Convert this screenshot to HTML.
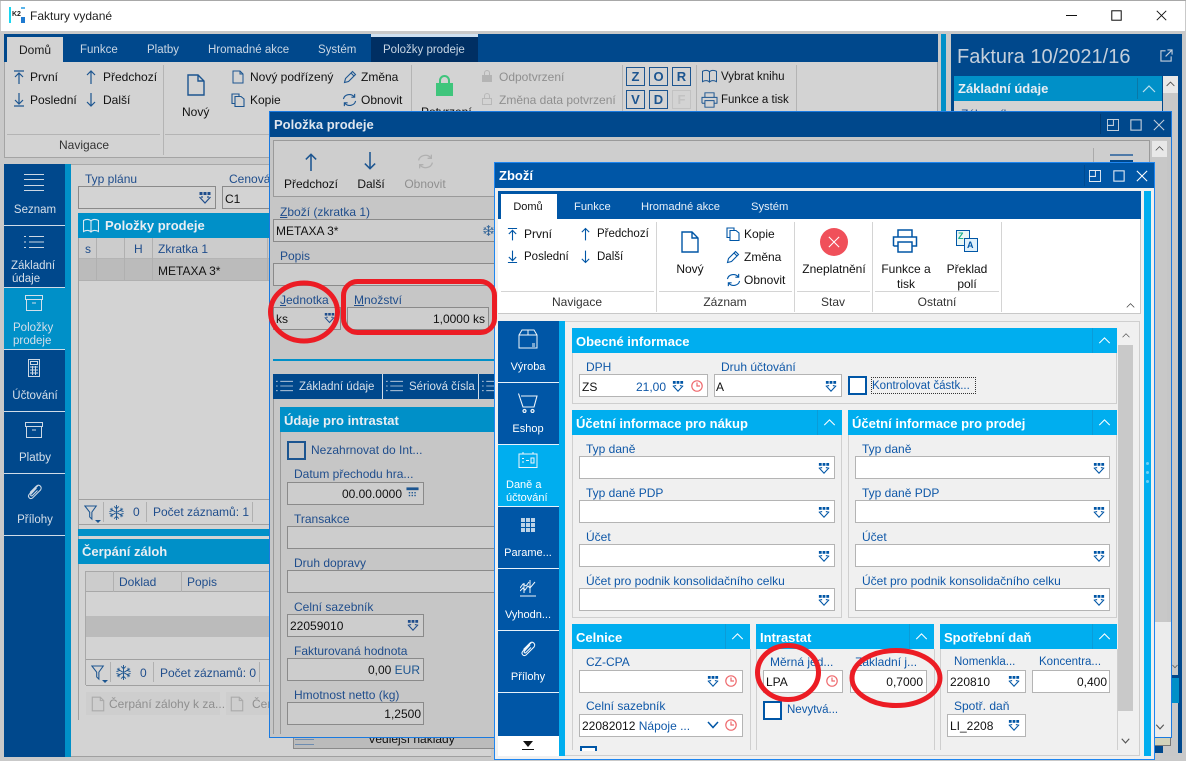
<!DOCTYPE html>
<html lang="cs"><head><meta charset="utf-8"><title>Faktury vydané</title>
<style>
html,body{margin:0;padding:0}
body{width:1186px;height:761px;position:relative;overflow:hidden;background:#c9c9c9;font-family:"Liberation Sans",sans-serif;font-size:12px;color:#111}
.b{position:absolute;box-sizing:border-box}
.t{position:absolute;white-space:nowrap;line-height:16px;font-size:12px}
.c{transform:translateX(-50%)}
.r{text-align:right}
.w{color:#fff}
.d{color:#1f4d8c}
.g{color:#8f8f8f}
.h{font-weight:bold;font-size:13px;color:#e9eef3}
.z{color:#0f58a8}
svg.i{position:absolute;overflow:visible;fill:none;stroke:currentColor;stroke-width:1.2}
.in1{position:absolute;box-sizing:border-box;border:1px solid #8a8a8a;background:#cdcdcd}
.in2{position:absolute;box-sizing:border-box;border:1px solid #b4b4b4;background:#fff}
.hd2{position:absolute;background:#00aeef;height:25px}
.hd2 span{position:absolute;left:4px;top:5px;font-weight:bold;font-size:13px;line-height:17px;color:#fff;white-space:nowrap}
.box2{position:absolute;box-sizing:border-box;border:1px solid #cfcfcf;border-top:0;background:#f0f0f0}
</style></head><body>
<svg width="0" height="0" style="position:absolute">
<defs>
<symbol id="dv" viewBox="0 0 12 14"><g fill="currentColor" stroke="none"><rect x="0.5" y="0" width="3" height="3"/><rect x="4.5" y="0" width="3" height="3"/><rect x="8.500" y="0" width="3" height="3"/></g><path d="M0.500 5L6 11L11.500 5M2 5H4M8 5H10" fill="none" stroke="currentColor" stroke-width="1.200"/></symbol>
<symbol id="clk" viewBox="0 0 12 12"><circle cx="6" cy="6" r="5.200" fill="none" stroke="#ee6a6e" stroke-width="1.200"/><path d="M6 2.500V6H9" fill="none" stroke="#ee6a6e"/></symbol>
<symbol id="first" viewBox="0 0 12 14"><path d="M1 1H11M6 14V3M2 7L6 3L10 7" fill="none" stroke="currentColor" stroke-width="1.200"/></symbol>
<symbol id="last" viewBox="0 0 12 14"><path d="M1 13H11M6 0V11M2 7L6 11L10 7" fill="none" stroke="currentColor" stroke-width="1.200"/></symbol>
<symbol id="up" viewBox="0 0 12 14"><path d="M6 14V1M2 5L6 1L10 5" fill="none" stroke="currentColor" stroke-width="1.200"/></symbol>
<symbol id="down" viewBox="0 0 12 14"><path d="M6 0V13M2 9L6 13L10 9" fill="none" stroke="currentColor" stroke-width="1.200"/></symbol>
<symbol id="doc" viewBox="0 0 18 22"><path d="M1 1H11L17 7V21H1ZM11 1V7H17" fill="none" stroke="currentColor" stroke-width="1.400"/></symbol>
<symbol id="doc2" viewBox="0 0 12 14"><path d="M1 1H8L11 4V13H1ZM8 1V4H11" fill="none" stroke="currentColor" stroke-width="1"/></symbol>
<symbol id="copy" viewBox="0 0 14 14"><path d="M4 10.500H1V1H8V3.500M4 3.500H10L13 6V13.500H4Z" fill="none" stroke="currentColor" stroke-width="1.100"/></symbol>
<symbol id="pen" viewBox="0 0 14 14"><path d="M1.500 12.500L2.500 8.500L9.500 1.500L12.500 4.500L5.500 11.500ZM8 3L11 6" fill="none" stroke="currentColor" stroke-width="1.100"/></symbol>
<symbol id="ref" viewBox="0 0 16 14"><path d="M1.500 6A6.500 6 0 0 1 13 3.500M13.500 0.500V4H10M14.500 8A6.500 6 0 0 1 3 10.500M2.500 13.500V10H6" fill="none" stroke="currentColor" stroke-width="1.200"/></symbol>
<symbol id="lst" viewBox="0 0 20 14"><path d="M5 1.500H20M5 7H20M5 12.500H20M0 1.500H2M0 7H2M0 12.500H2" fill="none" stroke="currentColor" stroke-width="1"/></symbol>
<symbol id="arch" viewBox="0 0 18 16"><path d="M0.500 0.500H17.500V4.500H0.500ZM1.500 4.500V15.500H16.500V4.500M7 8H11" fill="none" stroke="currentColor" stroke-width="1"/></symbol>
<symbol id="calc" viewBox="0 0 12 18"><path d="M0.500 0.500H11.500V17.500H0.500ZM2.500 2.500H9.500V5.500H2.500ZM2 8H10M2 11H10M2 14H10M4.500 7V16M7.500 7V16" fill="none" stroke="currentColor" stroke-width="1"/></symbol>
<symbol id="dcal" viewBox="0 0 14 14"><rect x="0.500" y="1.500" width="13" height="12" fill="none" stroke="currentColor"/><rect x="0.500" y="1.500" width="13" height="3" fill="currentColor" stroke="currentColor"/><g fill="currentColor" stroke="none"><rect x="3" y="6.500" width="1.500" height="1.500"/><rect x="6" y="6.500" width="1.500" height="1.500"/><rect x="9" y="6.500" width="1.500" height="1.500"/><rect x="3" y="9.500" width="1.500" height="1.500"/><rect x="6" y="9.500" width="1.500" height="1.500"/><rect x="9" y="9.500" width="1.500" height="1.500"/></g></symbol>
<symbol id="clip" viewBox="0 0 16 18"><path d="M11.500 2.500L3 11C0.500 13.500 3.500 17 6 15L14 7C16 4.500 13 0.500 10 3L3.500 9.500M10 5L4.500 11C3.500 12.500 5 13.500 6 12.500L11 7.500" fill="none" stroke="currentColor" stroke-width="1.100"/></symbol>
<symbol id="book" viewBox="0 0 16 16"><path d="M0.500 2.500C3 1 6.500 1 8 3C9.500 1 13 1 15.500 2.500V13.500C13 12 9.500 12 8 14C6.500 12 3 12 0.500 13.500ZM8 3V14" fill="none" stroke="currentColor" stroke-width="1.100"/></symbol>
<symbol id="prn" viewBox="0 0 26 24"><path d="M6 8V1H20V8M1.500 17V8H24.500V17H20M6 17H1.500M6 13H20V23H6Z" fill="none" stroke="currentColor" stroke-width="1.500"/></symbol>
<symbol id="flt" viewBox="0 0 16 18"><path d="M1 1H14L9 8V16L6.500 13.500V8Z" fill="none" stroke="currentColor" stroke-width="1.200"/></symbol>
<symbol id="snow" viewBox="0 0 16 16"><path d="M8 0V16M1 4L15 12M1 12L15 4M5.500 1.500L8 4L10.500 1.500M5.500 14.500L8 12L10.500 14.500M0.500 7L3.500 6L3 3M15.500 9L12.500 10L13 13M0.500 9L3.500 10L3 13M15.500 7L12.500 6L13 3" fill="none" stroke="currentColor" stroke-width="1"/></symbol>
<symbol id="box" viewBox="0 0 20 20"><path d="M1 6L4 1H16L19 6V19H1ZM1 6H19M10 1V6M14 15H17M14 17H17" fill="none" stroke="currentColor" stroke-width="1"/></symbol>
<symbol id="cart" viewBox="0 0 20 20"><path d="M0.500 0.500L5 14H16L19 3H3" fill="none" stroke="currentColor" stroke-width="1.100"/><circle cx="6.500" cy="18" r="1.500" fill="none" stroke="currentColor"/><circle cx="14.500" cy="18" r="1.500" fill="none" stroke="currentColor"/></symbol>
<symbol id="cal" viewBox="0 0 20 16"><path d="M1 2H19V15.500H1ZM5 0V2M15 0V2M4 6.500H6M4 10H6M8 8.500H11M13 6H16V11H13Z" fill="none" stroke="currentColor" stroke-width="1"/></symbol>
<symbol id="grid" viewBox="0 0 14 14"><g fill="currentColor" opacity=".85"><rect x="0" y="0" width="4" height="4"/><rect x="5" y="0" width="4" height="4"/><rect x="10" y="0" width="4" height="4"/><rect x="0" y="5" width="4" height="4"/><rect x="5" y="5" width="4" height="4"/><rect x="10" y="5" width="4" height="4"/><rect x="0" y="10" width="4" height="4"/><rect x="5" y="10" width="4" height="4"/><rect x="10" y="10" width="4" height="4"/></g></symbol>
<symbol id="chart" viewBox="0 0 16 18"><path d="M0 17H16M0 12L3 9L5 11L8 7L10 9L15 3M0 9L3 5L6 7L9 3M4 4V14M10 1V14" fill="none" stroke="currentColor" stroke-width="1"/></symbol>
<symbol id="ext" viewBox="0 0 14 14"><path d="M6 2H1V13H12V8M8 1H13V6M13 1L6 8" fill="none" stroke="currentColor" stroke-width="1.200"/></symbol>
<symbol id="rest" viewBox="0 0 14 14"><path d="M0.500 0.500H13.500V13.500H0.500ZM7.500 0.500V7.500H0.500" fill="none" stroke="currentColor" stroke-width="1.200"/></symbol>
<symbol id="maxi" viewBox="0 0 14 14"><rect x="1" y="1" width="12" height="12" fill="none" stroke="currentColor" stroke-width="1.300"/></symbol>
<symbol id="xx" viewBox="0 0 14 14"><path d="M1 1L13 13M13 1L1 13" fill="none" stroke="currentColor" stroke-width="1.200"/></symbol>
<symbol id="cu" viewBox="0 0 14 8"><path d="M1 7L7 1L13 7" fill="none" stroke="currentColor" stroke-width="1.200"/></symbol>
<symbol id="cd" viewBox="0 0 12 8"><path d="M1 1L6 6.500L11 1" fill="none" stroke="currentColor" stroke-width="1.500"/></symbol>
</defs></svg>

<!-- window chrome -->
<div class="b" style="left:0;top:0;width:1186px;height:1px;background:#a8a8a8"></div>
<div class="b" style="left:1px;top:1px;width:1184px;height:30px;background:#fff"></div>
<div class="b" style="left:9px;top:7px;width:2px;height:16px;background:#19d6f0"></div>
<div class="t" style="left:12px;top:10px;font-size:7px;line-height:10px;font-weight:bold;color:#222">K2</div>
<div class="b" style="left:21px;top:17px;width:4px;height:6px;background:#1f7ad0"></div>
<div class="b" style="left:21px;top:7px;width:4px;height:2px;background:#5ab4ea"></div>
<div class="t" style="left:30px;top:8px;color:#222">Faktury vydané</div>
<div class="b" style="left:1066px;top:15px;width:11px;height:1px;background:#111"></div>
<svg class="i" style="left:1111px;top:10px;width:11px;height:11px;color:#111"><use href="#maxi"/></svg>
<svg class="i" style="left:1156px;top:10px;width:11px;height:11px;color:#111"><use href="#xx"/></svg>

<!-- main ribbon -->
<div class="b" style="left:4px;top:34px;width:934px;height:28px;background:#00488c"></div>
<div class="b" style="left:7px;top:37px;width:56px;height:25px;background:#d3d3d3"></div>
<div class="t c" style="left:35px;top:42px;color:#1a1a1a">Domů</div>
<div class="t" style="left:80px;top:42px;font-size:11.500px;color:#c9d6e4">Funkce</div>
<div class="t" style="left:147px;top:42px;font-size:11.500px;color:#c9d6e4">Platby</div>
<div class="t" style="left:208px;top:42px;font-size:11.500px;color:#c9d6e4">Hromadné akce</div>
<div class="t" style="left:318px;top:42px;font-size:11.500px;color:#c9d6e4">Systém</div>
<div class="b" style="left:371px;top:34px;width:107px;height:28px;background:#002f63;border-top:3px solid #cfe0f0"></div>
<div class="t" style="left:383px;top:42px;font-size:11.500px;color:#c9d6e4">Položky prodeje</div>
<div class="b" style="left:4px;top:62px;width:934px;height:96px;background:#d3d3d3;border:1px solid #a4a4a4;border-top:0"></div>
<div class="b" style="left:163px;top:65px;width:1px;height:90px;background:#b4b4b4"></div>
<div class="b" style="left:411px;top:65px;width:1px;height:90px;background:#b4b4b4"></div>
<div class="b" style="left:622px;top:65px;width:1px;height:90px;background:#b4b4b4"></div>
<div class="b" style="left:696px;top:65px;width:1px;height:90px;background:#b4b4b4"></div>
<div class="b" style="left:796px;top:65px;width:1px;height:90px;background:#b4b4b4"></div>
<div class="b" style="left:7px;top:134px;width:153px;height:1px;background:#b4b4b4"></div>
<div class="b" style="left:165px;top:134px;width:244px;height:1px;background:#b4b4b4"></div>
<div class="t c d" style="left:84px;top:137px;color:#333">Navigace</div>
<svg class="i" style="left:13px;top:70px;width:12px;height:14px;color:#1c5590"><use href="#first"/></svg>
<div class="t" style="left:30px;top:69px">První</div>
<svg class="i" style="left:85px;top:70px;width:12px;height:14px;color:#1c5590"><use href="#up"/></svg>
<div class="t" style="left:103px;top:69px">Předchozí</div>
<svg class="i" style="left:13px;top:93px;width:12px;height:14px;color:#1c5590"><use href="#last"/></svg>
<div class="t" style="left:30px;top:92px">Poslední</div>
<svg class="i" style="left:85px;top:93px;width:12px;height:14px;color:#1c5590"><use href="#down"/></svg>
<div class="t" style="left:103px;top:92px">Další</div>
<svg class="i" style="left:187px;top:74px;width:18px;height:22px;color:#1c5590"><use href="#doc"/></svg>
<div class="t" style="left:182px;top:104px">Nový</div>
<svg class="i" style="left:232px;top:70px;width:12px;height:14px;color:#1c5590"><use href="#doc2"/></svg>
<div class="t" style="left:250px;top:69px">Nový podřízený</div>
<svg class="i" style="left:231px;top:93px;width:14px;height:14px;color:#1c5590"><use href="#copy"/></svg>
<div class="t" style="left:250px;top:92px">Kopie</div>
<svg class="i" style="left:343px;top:70px;width:14px;height:14px;color:#1c5590"><use href="#pen"/></svg>
<div class="t" style="left:361px;top:69px">Změna</div>
<svg class="i" style="left:342px;top:93px;width:15px;height:14px;color:#1c5590"><use href="#ref"/></svg>
<div class="t" style="left:361px;top:92px">Obnovit</div>
<div class="b" style="left:436px;top:83px;width:17px;height:13px;background:#3fc57c"></div>
<div class="b" style="left:439px;top:75px;width:11px;height:10px;border:2px solid #3fc57c;border-bottom:0;border-radius:6px 6px 0 0"></div>
<div class="t" style="left:421px;top:104px">Potvrzení</div>
<div class="b" style="left:482px;top:75px;width:10px;height:7px;background:#b4b4b4"></div>
<div class="b" style="left:484px;top:70px;width:6px;height:6px;border:1.500px solid #b4b4b4;border-bottom:0;border-radius:3px 3px 0 0"></div>
<div class="t g" style="left:499px;top:69px">Odpotvrzení</div>
<div class="b" style="left:482px;top:98px;width:10px;height:7px;border:1px solid #b8b8b8"></div>
<div class="b" style="left:484px;top:93px;width:6px;height:6px;border:1px solid #b8b8b8;border-bottom:0;border-radius:3px 3px 0 0"></div>
<div class="t g" style="left:499px;top:92px">Změna data potvrzení</div>
<div class="b" style="left:626px;top:67px;width:19px;height:19px;border:1px solid #1c5590;color:#1c5590;font-weight:bold;font-size:13px;line-height:17px;text-align:center">Z</div>
<div class="b" style="left:649px;top:67px;width:19px;height:19px;border:1px solid #1c5590;color:#1c5590;font-weight:bold;font-size:13px;line-height:17px;text-align:center">O</div>
<div class="b" style="left:672px;top:67px;width:19px;height:19px;border:1px solid #1c5590;color:#1c5590;font-weight:bold;font-size:13px;line-height:17px;text-align:center">R</div>
<div class="b" style="left:626px;top:90px;width:19px;height:19px;border:1px solid #1c5590;color:#1c5590;font-weight:bold;font-size:13px;line-height:17px;text-align:center">V</div>
<div class="b" style="left:649px;top:90px;width:19px;height:19px;border:1px solid #1c5590;color:#1c5590;font-weight:bold;font-size:13px;line-height:17px;text-align:center">D</div>
<div class="b" style="left:672px;top:90px;width:19px;height:19px;border:1px solid #c2c2c2;color:#c2c2c2;font-weight:bold;font-size:13px;line-height:17px;text-align:center">F</div>
<svg class="i" style="left:702px;top:69px;width:15px;height:15px;color:#1c5590"><use href="#book"/></svg>
<div class="t" style="left:721px;top:69px;font-size:11.500px">Vybrat knihu</div>
<svg class="i" style="left:701px;top:92px;width:17px;height:16px;color:#1c5590"><use href="#prn"/></svg>
<div class="t" style="left:721px;top:92px;font-size:11.500px">Funkce a tisk</div>

<!-- right dock -->
<div class="b" style="left:941px;top:34px;width:5px;height:100px;background:#0090c8"></div>
<div class="b" style="left:951px;top:34px;width:231px;height:719px;background:#00488c"></div>
<div class="t" style="left:957px;top:46px;font-size:20px;line-height:22px;color:#c4cfdb">Faktura 10/2021/16</div>
<svg class="i" style="left:1160px;top:49px;width:13px;height:13px;color:#c4cfdb"><use href="#ext"/></svg>
<div class="b" style="left:954px;top:76px;width:208px;height:25px;background:#0090c8"></div>
<div class="t h" style="left:958px;top:81px;line-height:16px">Základní údaje</div>
<div class="b" style="left:1137px;top:78px;width:1px;height:21px;background:#0a78a8"></div>
<svg class="i" style="left:1142px;top:85px;width:14px;height:8px;color:#b9dfee"><use href="#cu"/></svg>
<div class="b" style="left:954px;top:101px;width:208px;height:20px;background:#d3d3d3"></div>
<div class="t d" style="left:961px;top:106px">Zákazník</div>
<div class="b" style="left:1163px;top:76px;width:15px;height:680px;background:#c8c8c8"></div>
<div class="b" style="left:1163px;top:76px;width:15px;height:17px;background:#e8e8e8"></div>
<svg class="i" style="left:1166px;top:81px;width:9px;height:6px;color:#444"><use href="#cu"/></svg>
<svg class="i" style="left:1172px;top:664px;width:6px;height:5px;color:#555"><use href="#cd"/></svg>
<div class="b" style="left:1172px;top:675px;width:7px;height:3px;background:#00488c"></div>
<div class="b" style="left:1172px;top:678px;width:7px;height:25px;background:#0090c8"></div>

<!-- left navigation -->
<div class="b" style="left:4px;top:164px;width:61px;height:593px;background:#00488c"></div>
<div class="b" style="left:65px;top:164px;width:6px;height:593px;background:#0090c8"></div>
<div class="b" style="left:71px;top:164px;width:420px;height:593px;background:#d3d3d3"></div>
<div class="b" style="left:71px;top:164px;width:420px;height:1px;background:#a8a8a8"></div>
<div class="b" style="left:71px;top:756px;width:420px;height:1px;background:#a0a0a0"></div>
<div class="b" style="left:4px;top:288px;width:61px;height:61px;background:#0090c8"></div>
<div class="b" style="left:4px;top:225px;width:61px;height:1px;background:#d0dce8"></div>
<div class="b" style="left:4px;top:287px;width:61px;height:1px;background:#d0dce8"></div>
<div class="b" style="left:4px;top:349px;width:61px;height:1px;background:#d0dce8"></div>
<div class="b" style="left:4px;top:411px;width:61px;height:1px;background:#d0dce8"></div>
<div class="b" style="left:4px;top:473px;width:61px;height:1px;background:#d0dce8"></div>
<div class="b" style="left:4px;top:535px;width:61px;height:1px;background:#d0dce8"></div>
<div class="b" style="left:24px;top:174px;width:20px;height:1px;background:#cdd8e4"></div>
<div class="b" style="left:24px;top:179px;width:20px;height:1px;background:#cdd8e4"></div>
<div class="b" style="left:24px;top:185px;width:20px;height:1px;background:#cdd8e4"></div>
<div class="b" style="left:24px;top:190px;width:20px;height:1px;background:#cdd8e4"></div>
<div class="t c" style="left:35px;top:202px;font-size:11.500px;color:#d6dfe9">Seznam</div>
<svg class="i" style="left:24px;top:235px;width:20px;height:14px;color:#cdd8e4"><use href="#lst"/></svg>
<div class="t" style="left:11px;top:258px;font-size:11.500px;color:#d6dfe9">Základní</div>
<div class="t" style="left:12px;top:271px;font-size:11.500px;color:#d6dfe9">údaje</div>
<svg class="i" style="left:25px;top:295px;width:18px;height:16px;color:#d3e0ea"><use href="#arch"/></svg>
<div class="t" style="left:13px;top:320px;font-size:11.500px;color:#d6dfe9">Položky</div>
<div class="t" style="left:13px;top:333px;font-size:11.500px;color:#d6dfe9">prodeje</div>
<svg class="i" style="left:28px;top:359px;width:12px;height:18px;color:#cdd8e4"><use href="#calc"/></svg>
<div class="t c" style="left:35px;top:388px;font-size:11.500px;color:#d6dfe9">Účtování</div>
<svg class="i" style="left:25px;top:422px;width:18px;height:16px;color:#cdd8e4"><use href="#arch"/></svg>
<div class="t c" style="left:35px;top:450px;font-size:11.500px;color:#d6dfe9">Platby</div>
<svg class="i" style="left:26px;top:483px;width:17px;height:18px;color:#cdd8e4"><use href="#clip"/></svg>
<div class="t c" style="left:35px;top:512px;font-size:11.500px;color:#d6dfe9">Přílohy</div>

<!-- left content -->
<div class="t d" style="left:85px;top:171px">Typ plánu</div>
<div class="t d" style="left:229px;top:171px">Cenová</div>
<div class="in1" style="left:78px;top:186px;width:138px;height:23px;background:#d3d3d3"></div>
<svg class="i" style="left:199px;top:192px;width:12px;height:14px;color:#1f4d8c"><use href="#dv"/></svg>
<div class="in1" style="left:222px;top:186px;width:60px;height:23px;background:#d3d3d3"></div>
<div class="t" style="left:225px;top:191px">C1</div>
<div class="b" style="left:78px;top:213px;width:200px;height:25px;background:#0090c8"></div>
<svg class="i" style="left:83px;top:218px;width:16px;height:16px;color:#dbe9f2"><use href="#book"/></svg>
<div class="t h" style="left:105px;top:218px">Položky prodeje</div>
<div class="b" style="left:78px;top:238px;width:1px;height:482px;background:#a0a0a0"></div>
<div class="b" style="left:79px;top:238px;width:200px;height:21px;background:#cccccc;border-bottom:1px solid #b4b4b4"></div>
<div class="b" style="left:79px;top:259px;width:200px;height:22px;background:#bbbbbb;border-bottom:1px solid #b0b0b0"></div>
<div class="b" style="left:96px;top:238px;width:1px;height:43px;background:#b0b0b0"></div>
<div class="b" style="left:124px;top:238px;width:1px;height:43px;background:#b0b0b0"></div>
<div class="b" style="left:152px;top:238px;width:1px;height:43px;background:#b0b0b0"></div>
<div class="b" style="left:267px;top:238px;width:1px;height:43px;background:#b0b0b0"></div>
<div class="t d" style="left:85px;top:241px">s</div>
<div class="t d" style="left:134px;top:241px">H</div>
<div class="t d" style="left:158px;top:241px">Zkratka 1</div>
<div class="t" style="left:158px;top:263px">METAXA 3*</div>
<div class="b" style="left:79px;top:499px;width:200px;height:26px;border-top:1px solid #a0a0a0;border-bottom:1px solid #a0a0a0"></div>
<div class="b" style="left:103px;top:502px;width:1px;height:20px;background:#b0b0b0"></div>
<div class="b" style="left:146px;top:502px;width:1px;height:20px;background:#b0b0b0"></div>
<div class="b" style="left:252px;top:502px;width:1px;height:20px;background:#b0b0b0"></div>
<svg class="i" style="left:84px;top:505px;width:14px;height:16px;color:#1c5590"><use href="#flt"/></svg>
<div class="b" style="left:95px;top:520px;border:3px solid transparent;border-top:3px solid #1c5590"></div>
<svg class="i" style="left:109px;top:505px;width:15px;height:15px;color:#1c5590"><use href="#snow"/></svg>
<div class="t d" style="left:133px;top:504px">0</div>
<div class="t d" style="left:153px;top:504px">Počet záznamů: 1</div>
<div class="b" style="left:78px;top:529px;width:200px;height:7px;background:#0090c8"></div>
<div class="b" style="left:78px;top:539px;width:200px;height:25px;background:#0090c8"></div>
<div class="t h" style="left:82px;top:544px">Čerpání záloh</div>
<div class="b" style="left:85px;top:571px;width:190px;height:21px;background:#cccccc;border:1px solid #a8a8a8;border-right:0"></div>
<div class="b" style="left:113px;top:571px;width:1px;height:21px;background:#b0b0b0"></div>
<div class="b" style="left:181px;top:571px;width:1px;height:21px;background:#b0b0b0"></div>
<div class="t d" style="left:119px;top:574px">Doklad</div>
<div class="t d" style="left:187px;top:574px">Popis</div>
<div class="b" style="left:85px;top:592px;width:1px;height:93px;background:#a8a8a8"></div>
<div class="b" style="left:86px;top:616px;width:190px;height:21px;background:#bbbbbb"></div>
<div class="b" style="left:86px;top:659px;width:190px;height:1px;background:#a0a0a0"></div>
<div class="b" style="left:86px;top:685px;width:190px;height:1px;background:#a0a0a0"></div>
<div class="b" style="left:110px;top:662px;width:1px;height:20px;background:#b0b0b0"></div>
<div class="b" style="left:153px;top:662px;width:1px;height:20px;background:#b0b0b0"></div>
<div class="b" style="left:259px;top:662px;width:1px;height:20px;background:#b0b0b0"></div>
<svg class="i" style="left:91px;top:665px;width:14px;height:16px;color:#1c5590"><use href="#flt"/></svg>
<div class="b" style="left:102px;top:680px;border:3px solid transparent;border-top:3px solid #1c5590"></div>
<svg class="i" style="left:116px;top:665px;width:15px;height:15px;color:#1c5590"><use href="#snow"/></svg>
<div class="t d" style="left:140px;top:665px">0</div>
<div class="t d" style="left:160px;top:665px">Počet záznamů: 0</div>
<div class="b" style="left:86px;top:692px;width:134px;height:23px;background:#cecece"></div>
<div class="b" style="left:226px;top:692px;width:50px;height:23px;background:#cecece"></div>
<svg class="i" style="left:91px;top:696px;width:14px;height:16px;color:#aaa"><use href="#doc2"/></svg>
<div class="t g" style="left:109px;top:696px">Čerpání zálohy k za...</div>
<svg class="i" style="left:229px;top:696px;width:16px;height:16px;color:#aaa"><use href="#doc2"/></svg>
<div class="t g" style="left:252px;top:696px">Čer</div>

<!-- dialog 1 -->
<div class="b" style="left:293px;top:737px;width:210px;height:12px;background:#bbbbbb;border-bottom:1px solid #8a8a8a;border-left:1px solid #8a8a8a"></div>
<div class="t" style="left:368px;top:731px">Vedlejší náklady</div>
<div class="b" style="left:295px;top:739px;width:19px;height:1px;background:#6d8cb0"></div>
<div class="b" style="left:295px;top:744px;width:19px;height:1px;background:#6d8cb0"></div>
<div class="b" style="left:1154px;top:737px;width:17px;height:9px;background:#d2d2ba;border:1px solid #777;border-top:0"></div>
<div class="b" style="left:269px;top:111px;width:903px;height:627px;background:#c6c6c6;border:1px solid #1a7ae0"></div>
<div class="b" style="left:270px;top:112px;width:901px;height:25px;background:#00488c"></div>
<div class="t" style="left:274px;top:117px;font-size:13px;font-weight:bold;color:#dfe6ee">Položka prodeje</div>
<div class="b" style="left:1100px;top:114px;width:1px;height:20px;background:#003a72"></div>
<svg class="i" style="left:1107px;top:119px;width:12px;height:12px;color:#c4cfdb"><use href="#rest"/></svg>
<svg class="i" style="left:1130px;top:119px;width:12px;height:12px;color:#c4cfdb"><use href="#maxi"/></svg>
<svg class="i" style="left:1153px;top:119px;width:12px;height:12px;color:#c4cfdb"><use href="#xx"/></svg>
<div class="b" style="left:273px;top:140px;width:877px;height:57px;background:#cecece;border:1px solid #9a9a9a"></div>
<svg class="i" style="left:303px;top:153px;width:16px;height:18px;color:#1c5590"><use href="#up"/></svg>
<svg class="i" style="left:362px;top:152px;width:16px;height:18px;color:#1c5590"><use href="#down"/></svg>
<svg class="i" style="left:417px;top:153px;width:17px;height:17px;color:#b0b0b0"><use href="#ref"/></svg>
<div class="t c" style="left:311px;top:176px">Předchozí</div>
<div class="t c" style="left:371px;top:176px">Další</div>
<div class="t c g" style="left:425px;top:176px">Obnovit</div>
<div class="b" style="left:1093px;top:148px;width:1px;height:14px;background:#aaa"></div>
<div class="b" style="left:1110px;top:154px;width:23px;height:2px;background:#4f7aa8"></div>
<div class="b" style="left:1110px;top:160px;width:23px;height:2px;background:#00488c"></div>
<div class="b" style="left:1152px;top:140px;width:15px;height:482px;background:#c8c8c8"></div>
<div class="b" style="left:1152px;top:141px;width:15px;height:16px;background:#e8e8e8"></div>
<svg class="i" style="left:1155px;top:146px;width:9px;height:5px;color:#444"><use href="#cu"/></svg>
<div class="b" style="left:1152px;top:622px;width:19px;height:115px;background:#ececec"></div>
<svg class="i" style="left:1155px;top:724px;width:10px;height:6px;color:#555"><use href="#cd"/></svg>
<div class="t d" style="left:280px;top:204px"><u>Z</u>boží (zkratka 1)</div>
<div class="in1" style="left:273px;top:219px;width:225px;height:23px"></div>
<div class="t" style="left:276px;top:223px">METAXA 3*</div>
<svg class="i" style="left:483px;top:225px;width:11px;height:11px;color:#1c5590"><use href="#snow"/></svg>
<div class="t d" style="left:280px;top:248px">Popis</div>
<div class="in1" style="left:273px;top:263px;width:225px;height:23px"></div>
<div class="t d" style="left:280px;top:292px"><u>J</u>ednotka</div>
<div class="in1" style="left:273px;top:307px;width:68px;height:23px"></div>
<div class="t" style="left:276px;top:311px">ks</div>
<svg class="i" style="left:324px;top:313px;width:11px;height:12px;color:#1f4d8c"><use href="#dv"/></svg>
<div class="t d" style="left:354px;top:292px"><u>M</u>nožství</div>
<div class="in1" style="left:347px;top:307px;width:142px;height:23px"></div>
<div class="t r" style="left:400px;top:311px;width:85px">1,0000 ks</div>
<div class="b" style="left:273px;top:359px;width:225px;height:2px;background:#0090c8"></div>
<div class="b" style="left:273px;top:374px;width:225px;height:25px;background:#00488c"></div>
<div class="b" style="left:382px;top:374px;width:1px;height:25px;background:#d3dde8"></div>
<div class="b" style="left:478px;top:374px;width:1px;height:25px;background:#d3dde8"></div>
<svg class="i" style="left:276px;top:380px;width:17px;height:12px;color:#cdd8e4"><use href="#lst"/></svg>
<svg class="i" style="left:386px;top:380px;width:17px;height:12px;color:#cdd8e4"><use href="#lst"/></svg>
<svg class="i" style="left:482px;top:380px;width:17px;height:12px;color:#cdd8e4"><use href="#lst"/></svg>
<div class="t" style="left:299px;top:379px;font-size:11.500px;color:#d6dfe9">Základní údaje</div>
<div class="t" style="left:409px;top:379px;font-size:11.500px;color:#d6dfe9">Sériová čísla</div>
<div class="b" style="left:273px;top:399px;width:1px;height:335px;background:#9a9a9a"></div>
<div class="b" style="left:280px;top:407px;width:1px;height:327px;background:#9a9a9a"></div>
<div class="b" style="left:280px;top:407px;width:220px;height:25px;background:#0090c8"></div>
<div class="t h" style="left:284px;top:413px">Údaje pro intrastat</div>
<div class="b" style="left:287px;top:441px;width:19px;height:19px;border:2px solid #1c5590"></div>
<div class="t d" style="left:311px;top:442px">Nezahrnovat do Int...</div>
<div class="t d" style="left:294px;top:466px">Datum přechodu hra...</div>
<div class="in1" style="left:287px;top:482px;width:137px;height:23px"></div>
<div class="t r" style="left:320px;top:486px;width:82px">00.00.0000</div>
<svg class="i" style="left:406px;top:486px;width:13px;height:13px;color:#1c5590;stroke-width:0"><use href="#dcal"/></svg>
<div class="t d" style="left:294px;top:511px">Transakce</div>
<div class="in1" style="left:287px;top:526px;width:212px;height:23px"></div>
<div class="t d" style="left:294px;top:555px">Druh dopravy</div>
<div class="in1" style="left:287px;top:570px;width:212px;height:23px"></div>
<div class="t d" style="left:294px;top:599px">Celní sazebník</div>
<div class="in1" style="left:287px;top:614px;width:137px;height:23px"></div>
<div class="t" style="left:290px;top:618px">22059010</div>
<svg class="i" style="left:407px;top:620px;width:12px;height:13px;color:#1f4d8c"><use href="#dv"/></svg>
<div class="t d" style="left:294px;top:643px">Fakturovaná hodnota</div>
<div class="in1" style="left:287px;top:658px;width:137px;height:23px"></div>
<div class="t r" style="left:320px;top:662px;width:100px">0,00 <span style="color:#1c5590">EUR</span></div>
<div class="t d" style="left:294px;top:687px">Hmotnost netto (kg)</div>
<div class="in1" style="left:287px;top:702px;width:137px;height:23px"></div>
<div class="t r" style="left:320px;top:706px;width:101px">1,2500</div>

<!-- dialog 2 -->
<div class="b" style="left:494px;top:162px;width:661px;height:598px;background:#f0f0f0;border:1px solid #1f86f0"></div>
<div class="b" style="left:495px;top:163px;width:659px;height:25px;background:#0056a6"></div>
<div class="t" style="left:499px;top:168px;font-size:13px;font-weight:bold;color:#fff">Zboží</div>
<div class="b" style="left:1084px;top:165px;width:1px;height:21px;background:#004a90"></div>
<svg class="i" style="left:1089px;top:170px;width:12px;height:12px;color:#dfe9f3"><use href="#rest"/></svg>
<svg class="i" style="left:1113px;top:170px;width:12px;height:12px;color:#dfe9f3"><use href="#maxi"/></svg>
<svg class="i" style="left:1136px;top:170px;width:12px;height:12px;color:#fff"><use href="#xx"/></svg>
<div class="b" style="left:1144px;top:191px;width:7px;height:565px;background:#00aeef"></div>
<div class="b" style="left:498px;top:191px;width:643px;height:123px;background:#fff;border-bottom:1px solid #c8c8c8;border-right:1px solid #c8c8c8"></div>
<div class="b" style="left:498px;top:191px;width:643px;height:28px;background:#0056a6"></div>
<div class="b" style="left:501px;top:194px;width:56px;height:25px;background:#fff"></div>
<div class="t c" style="left:528px;top:199px;font-size:11px;color:#111">Domů</div>
<div class="t" style="left:574px;top:199px;font-size:11.200px;color:#e8f0f8">Funkce</div>
<div class="t" style="left:641px;top:199px;font-size:11.200px;color:#e8f0f8">Hromadné akce</div>
<div class="t" style="left:751px;top:199px;font-size:11.200px;color:#e8f0f8">Systém</div>
<div class="b" style="left:656px;top:222px;width:1px;height:90px;background:#d4d4d4"></div>
<div class="b" style="left:794px;top:222px;width:1px;height:90px;background:#d4d4d4"></div>
<div class="b" style="left:872px;top:222px;width:1px;height:90px;background:#d4d4d4"></div>
<div class="b" style="left:1001px;top:222px;width:1px;height:90px;background:#d4d4d4"></div>
<div class="b" style="left:501px;top:291px;width:153px;height:1px;background:#d4d4d4"></div>
<div class="b" style="left:659px;top:291px;width:133px;height:1px;background:#d4d4d4"></div>
<div class="b" style="left:797px;top:291px;width:73px;height:1px;background:#d4d4d4"></div>
<div class="b" style="left:875px;top:291px;width:124px;height:1px;background:#d4d4d4"></div>
<div class="t c" style="left:577px;top:294px;color:#333">Navigace</div>
<div class="t c" style="left:725px;top:294px;color:#333">Záznam</div>
<div class="t c" style="left:833px;top:294px;color:#333">Stav</div>
<div class="t c" style="left:937px;top:294px;color:#333">Ostatní</div>
<svg class="i" style="left:1126px;top:303px;width:9px;height:5px;color:#444"><use href="#cu"/></svg>
<svg class="i" style="left:507px;top:227px;width:11px;height:14px;color:#0056a6"><use href="#first"/></svg>
<div class="t" style="left:524px;top:226px">První</div>
<svg class="i" style="left:580px;top:227px;width:11px;height:14px;color:#0056a6"><use href="#up"/></svg>
<div class="t" style="left:597px;top:226px;font-size:11.500px">Předchozí</div>
<svg class="i" style="left:507px;top:250px;width:11px;height:14px;color:#0056a6"><use href="#last"/></svg>
<div class="t" style="left:524px;top:249px;font-size:11.500px">Poslední</div>
<svg class="i" style="left:580px;top:250px;width:11px;height:14px;color:#0056a6"><use href="#down"/></svg>
<div class="t" style="left:597px;top:249px;font-size:11.500px">Další</div>
<svg class="i" style="left:681px;top:231px;width:18px;height:22px;color:#0056a6"><use href="#doc"/></svg>
<div class="t c" style="left:690px;top:261px">Nový</div>
<svg class="i" style="left:726px;top:227px;width:14px;height:14px;color:#0056a6"><use href="#copy"/></svg>
<div class="t" style="left:744px;top:226px">Kopie</div>
<svg class="i" style="left:726px;top:250px;width:14px;height:14px;color:#0056a6"><use href="#pen"/></svg>
<div class="t" style="left:744px;top:249px">Změna</div>
<svg class="i" style="left:726px;top:273px;width:15px;height:14px;color:#0056a6"><use href="#ref"/></svg>
<div class="t" style="left:744px;top:272px">Obnovit</div>
<div class="b" style="left:820px;top:228px;width:28px;height:28px;border-radius:50%;background:#f0505a"></div>
<svg class="i" style="left:828px;top:236px;width:12px;height:12px;color:#fff"><use href="#xx"/></svg>
<div class="t c" style="left:834px;top:261px">Zneplatnění</div>
<svg class="i" style="left:892px;top:229px;width:26px;height:24px;color:#0056a6"><use href="#prn"/></svg>
<div class="t c" style="left:906px;top:261px">Funkce a</div>
<div class="t c" style="left:906px;top:276px">tisk</div>
<div class="b" style="left:956px;top:230px;width:14px;height:16px;background:#eaf6f4;border:1px solid #0056a6"></div>
<div class="t" style="left:958px;top:230px;font-size:9px;line-height:12px;font-weight:bold;color:#18b088">Z</div>
<div class="b" style="left:964px;top:238px;width:14px;height:14px;background:#dff0fb;border:1px solid #0056a6"></div>
<div class="t" style="left:967px;top:239px;font-size:9px;line-height:12px;font-weight:bold;color:#0056a6">A</div>
<div class="t c" style="left:967px;top:261px">Překlad</div>
<div class="t c" style="left:967px;top:276px">polí</div>

<!-- dialog 2 side nav -->
<div class="b" style="left:498px;top:321px;width:61px;height:415px;background:#0056a6"></div>
<div class="b" style="left:498px;top:736px;width:61px;height:20px;background:#fff"></div>
<div class="b" style="left:559px;top:321px;width:6px;height:435px;background:#00aeef"></div>
<div class="b" style="left:498px;top:445px;width:61px;height:61px;background:#00aeef"></div>
<div class="b" style="left:498px;top:382px;width:61px;height:1px;background:#e8f2fa"></div>
<div class="b" style="left:498px;top:444px;width:61px;height:1px;background:#e8f2fa"></div>
<div class="b" style="left:498px;top:506px;width:61px;height:1px;background:#e8f2fa"></div>
<div class="b" style="left:498px;top:568px;width:61px;height:1px;background:#e8f2fa"></div>
<div class="b" style="left:498px;top:630px;width:61px;height:1px;background:#e8f2fa"></div>
<div class="b" style="left:498px;top:692px;width:61px;height:1px;background:#e8f2fa"></div>
<svg class="i" style="left:518px;top:329px;width:20px;height:20px;color:#f0f6fb"><use href="#box"/></svg>
<div class="t c w" style="left:528px;top:359px;font-size:11px">Výroba</div>
<svg class="i" style="left:518px;top:393px;width:20px;height:20px;color:#f0f6fb"><use href="#cart"/></svg>
<div class="t c w" style="left:528px;top:421px;font-size:11px">Eshop</div>
<svg class="i" style="left:518px;top:452px;width:20px;height:16px;color:#f0f6fb"><use href="#cal"/></svg>
<div class="t w" style="left:506px;top:477px;font-size:11px">Daně a</div>
<div class="t w" style="left:506px;top:490px;font-size:11px">účtování</div>
<svg class="i" style="left:521px;top:518px;width:14px;height:14px;color:#dfe9f3;stroke:none"><use href="#grid"/></svg>
<div class="t c w" style="left:528px;top:545px;font-size:11px">Parame...</div>
<svg class="i" style="left:520px;top:579px;width:16px;height:18px;color:#f0f6fb"><use href="#chart"/></svg>
<div class="t c w" style="left:528px;top:607px;font-size:11px">Vyhodn...</div>
<svg class="i" style="left:520px;top:640px;width:16px;height:18px;color:#f0f6fb"><use href="#clip"/></svg>
<div class="t c w" style="left:528px;top:669px;font-size:11px">Přílohy</div>
<div class="b" style="left:523px;top:741px;border:5px solid transparent;border-top:6px solid #111;border-bottom:0"></div>
<div class="b" style="left:522px;top:749px;width:12px;height:1px;background:#111"></div>

<!-- dialog 2 panel -->
<div class="b" style="left:565px;top:321px;width:575px;height:435px;border:1px solid #cfcfcf;border-left:0"></div>
<div class="b" style="left:1119px;top:328px;width:14px;height:16px;background:#f0f0f0"></div>
<svg class="i" style="left:1122px;top:333px;width:8px;height:5px;color:#555"><use href="#cu"/></svg>
<div class="b" style="left:1118px;top:345px;width:15px;height:366px;background:#c9c9c9"></div>
<svg class="i" style="left:1121px;top:738px;width:9px;height:6px;color:#555"><use href="#cd"/></svg>
<div class="b" style="left:1146px;top:462px;width:3px;height:3px;background:#6fd0f4;border-radius:50%"></div>
<div class="b" style="left:1146px;top:471px;width:3px;height:3px;background:#6fd0f4;border-radius:50%"></div>
<div class="b" style="left:1146px;top:480px;width:3px;height:3px;background:#6fd0f4;border-radius:50%"></div>

<!-- Obecné informace -->
<div class="hd2" style="left:572px;top:328px;width:545px"><span>Obecné informace</span></div>
<div class="box2" style="left:572px;top:353px;width:545px;height:51px"></div>
<div class="b" style="left:1092px;top:328px;width:1px;height:25px;background:#0a9cd8"></div>
<svg class="i" style="left:1098px;top:337px;width:13px;height:7px;color:#fff"><use href="#cu"/></svg>
<div class="t z" style="left:586px;top:359px">DPH</div>
<div class="in2" style="left:579px;top:374px;width:129px;height:23px"></div>
<div class="t" style="left:582px;top:379px">ZS</div>
<div class="t r z" style="left:620px;top:379px;width:46px">21,00</div>
<svg class="i" style="left:672px;top:381px;width:12px;height:13px;color:#0056a6"><use href="#dv"/></svg>
<svg class="i" style="left:691px;top:380px;width:12px;height:12px"><use href="#clk"/></svg>
<div class="t z" style="left:721px;top:359px">Druh účtování</div>
<div class="in2" style="left:714px;top:374px;width:128px;height:23px"></div>
<div class="t" style="left:716px;top:379px">A</div>
<svg class="i" style="left:825px;top:381px;width:12px;height:13px;color:#0056a6"><use href="#dv"/></svg>
<div class="b" style="left:848px;top:376px;width:19px;height:19px;border:2px solid #0056a6;background:#fff"></div>
<div class="b" style="left:871px;top:377px;width:105px;height:17px;border:1px dotted #333"></div>
<div class="t z" style="left:872px;top:378px;font-size:11.500px">Kontrolovat částk...</div>

<!-- Účetní informace -->
<div class="hd2" style="left:572px;top:410px;width:270px"><span>Účetní informace pro nákup</span></div>
<div class="box2" style="left:572px;top:435px;width:270px;height:183px"></div>
<div class="b" style="left:817px;top:410px;width:1px;height:25px;background:#0a9cd8"></div>
<svg class="i" style="left:823px;top:419px;width:13px;height:7px;color:#fff"><use href="#cu"/></svg>
<div class="hd2" style="left:848px;top:410px;width:269px"><span>Účetní informace pro prodej</span></div>
<div class="box2" style="left:848px;top:435px;width:269px;height:183px"></div>
<div class="b" style="left:1092px;top:410px;width:1px;height:25px;background:#0a9cd8"></div>
<svg class="i" style="left:1098px;top:419px;width:13px;height:7px;color:#fff"><use href="#cu"/></svg>

<div class="t z" style="left:586px;top:441px">Typ daně</div>
<div class="in2" style="left:579px;top:456px;width:256px;height:23px"></div>
<svg class="i" style="left:818px;top:463px;width:12px;height:13px;color:#0056a6"><use href="#dv"/></svg>
<div class="t z" style="left:586px;top:485px">Typ daně PDP</div>
<div class="in2" style="left:579px;top:500px;width:256px;height:23px"></div>
<svg class="i" style="left:818px;top:507px;width:12px;height:13px;color:#0056a6"><use href="#dv"/></svg>
<div class="t z" style="left:586px;top:529px">Účet</div>
<div class="in2" style="left:579px;top:544px;width:256px;height:23px"></div>
<svg class="i" style="left:818px;top:551px;width:12px;height:13px;color:#0056a6"><use href="#dv"/></svg>
<div class="t z" style="left:586px;top:573px">Účet pro podnik konsolidačního celku</div>
<div class="in2" style="left:579px;top:588px;width:256px;height:23px"></div>
<svg class="i" style="left:818px;top:595px;width:12px;height:13px;color:#0056a6"><use href="#dv"/></svg>

<div class="t z" style="left:862px;top:441px">Typ daně</div>
<div class="in2" style="left:855px;top:456px;width:255px;height:23px"></div>
<svg class="i" style="left:1093px;top:463px;width:12px;height:13px;color:#0056a6"><use href="#dv"/></svg>
<div class="t z" style="left:862px;top:485px">Typ daně PDP</div>
<div class="in2" style="left:855px;top:500px;width:255px;height:23px"></div>
<svg class="i" style="left:1093px;top:507px;width:12px;height:13px;color:#0056a6"><use href="#dv"/></svg>
<div class="t z" style="left:862px;top:529px">Účet</div>
<div class="in2" style="left:855px;top:544px;width:255px;height:23px"></div>
<svg class="i" style="left:1093px;top:551px;width:12px;height:13px;color:#0056a6"><use href="#dv"/></svg>
<div class="t z" style="left:862px;top:573px">Účet pro podnik konsolidačního celku</div>
<div class="in2" style="left:855px;top:588px;width:255px;height:23px"></div>
<svg class="i" style="left:1093px;top:595px;width:12px;height:13px;color:#0056a6"><use href="#dv"/></svg>

<!-- Celnice / Intrastat / Spotřební daň -->
<div class="hd2" style="left:572px;top:624px;width:178px"><span>Celnice</span></div>
<div class="b" style="left:725px;top:624px;width:1px;height:25px;background:#0a9cd8"></div>
<svg class="i" style="left:731px;top:633px;width:13px;height:7px;color:#fff"><use href="#cu"/></svg>
<div class="hd2" style="left:756px;top:624px;width:178px"><span>Intrastat</span></div>
<div class="b" style="left:909px;top:624px;width:1px;height:25px;background:#0a9cd8"></div>
<svg class="i" style="left:915px;top:633px;width:13px;height:7px;color:#fff"><use href="#cu"/></svg>
<div class="hd2" style="left:940px;top:624px;width:177px"><span>Spotřební daň</span></div>
<div class="b" style="left:1092px;top:624px;width:1px;height:25px;background:#0a9cd8"></div>
<svg class="i" style="left:1098px;top:633px;width:13px;height:7px;color:#fff"><use href="#cu"/></svg>
<div class="b" style="left:572px;top:649px;width:1px;height:101px;background:#cfcfcf"></div>
<div class="b" style="left:750px;top:649px;width:1px;height:101px;background:#cfcfcf"></div>
<div class="b" style="left:756px;top:649px;width:1px;height:101px;background:#cfcfcf"></div>
<div class="b" style="left:934px;top:649px;width:1px;height:101px;background:#cfcfcf"></div>
<div class="b" style="left:940px;top:649px;width:1px;height:101px;background:#cfcfcf"></div>
<div class="b" style="left:1117px;top:649px;width:1px;height:101px;background:#cfcfcf"></div>

<div class="t z" style="left:586px;top:654px">CZ-CPA</div>
<div class="in2" style="left:579px;top:670px;width:164px;height:23px"></div>
<svg class="i" style="left:707px;top:676px;width:12px;height:13px;color:#0056a6"><use href="#dv"/></svg>
<svg class="i" style="left:725px;top:675px;width:12px;height:12px"><use href="#clk"/></svg>
<div class="t z" style="left:586px;top:698px">Celní sazebník</div>
<div class="in2" style="left:579px;top:714px;width:164px;height:23px"></div>
<div class="t" style="left:582px;top:718px;font-size:12px">22082012 <span style="color:#0f58a8">Nápoje ...</span></div>
<svg class="i" style="left:707px;top:721px;width:12px;height:8px;color:#0056a6"><use href="#cd"/></svg>
<svg class="i" style="left:725px;top:719px;width:12px;height:12px"><use href="#clk"/></svg>
<div class="b" style="left:580px;top:746px;width:17px;height:5px;border:2px solid #0056a6;border-bottom:0;background:#fff"></div>

<div class="t z" style="left:770px;top:654px">Měrná jed...</div>
<div class="in2" style="left:763px;top:670px;width:80px;height:23px"></div>
<div class="t" style="left:766px;top:674px">LPA</div>
<svg class="i" style="left:826px;top:675px;width:12px;height:12px"><use href="#clk"/></svg>
<div class="t z" style="left:855px;top:654px">Základní j...</div>
<div class="in2" style="left:850px;top:670px;width:77px;height:23px"></div>
<div class="t r" style="left:860px;top:674px;width:63px">0,7000</div>
<div class="b" style="left:763px;top:701px;width:19px;height:19px;border:2px solid #0056a6;background:#fff"></div>
<div class="t z" style="left:787px;top:702px;font-size:11.500px">Nevytvá...</div>

<div class="t z" style="left:954px;top:654px;font-size:11.500px">Nomenkla...</div>
<div class="in2" style="left:947px;top:670px;width:79px;height:23px"></div>
<div class="t" style="left:950px;top:674px">220810</div>
<svg class="i" style="left:1008px;top:676px;width:12px;height:13px;color:#0056a6"><use href="#dv"/></svg>
<div class="t z" style="left:1039px;top:654px;font-size:11.500px">Koncentra...</div>
<div class="in2" style="left:1032px;top:670px;width:78px;height:23px"></div>
<div class="t r" style="left:1050px;top:674px;width:57px">0,400</div>
<div class="t z" style="left:954px;top:698px">Spotř. daň</div>
<div class="in2" style="left:947px;top:714px;width:79px;height:23px"></div>
<div class="t" style="left:950px;top:718px">LI_2208</div>
<svg class="i" style="left:1008px;top:720px;width:12px;height:13px;color:#0056a6"><use href="#dv"/></svg>

<!-- red annotations -->
<svg class="b" style="left:0;top:0;width:1186px;height:761px;pointer-events:none" viewBox="0 0 1186 761">
<g fill="none" stroke="#ec1c24" stroke-width="5">
<ellipse cx="304" cy="312" rx="33.500" ry="29"/>
<rect x="343.500" y="281.500" width="151" height="51" rx="14" ry="14"/>
<ellipse cx="788" cy="672.500" rx="30.500" ry="27"/>
<ellipse cx="896" cy="678" rx="44" ry="27.500"/>
</g></svg>
</body></html>
